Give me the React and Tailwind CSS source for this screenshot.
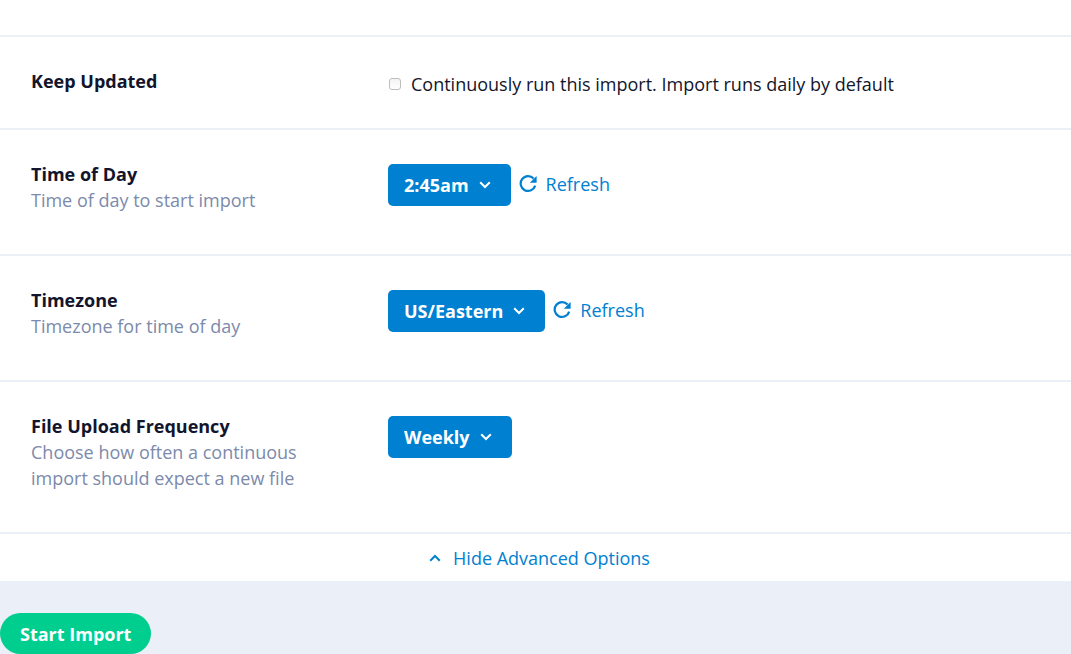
import { useState } from 'react';

const ChevronIcon = ({ className }) => (
  <svg viewBox="0 0 12 8" fill="none" stroke="currentColor" strokeWidth="2" className={className} aria-hidden="true">
    <path d="M1.2 1.3 6 6l4.8-4.7" />
  </svg>
);

const RefreshIcon = () => (
  <svg viewBox="0 0 18 18" className="h-[18px] w-[18px]" aria-hidden="true">
    <path d="M16.2 10.6A7.4 7.4 0 1 1 14.6 3.6" fill="none" stroke="currentColor" strokeWidth="2.2" />
    <path d="M17.6 1v6.8h-6.8z" fill="currentColor" />
  </svg>
);

const SettingRow = ({ title, description, htmlFor, children }) => (
  <div className="flex border-t-2 border-[#ebeff6]">
    <div className={`w-1/3 px-[31px] pt-[31px] ${description ? 'pb-[41px]' : 'pb-[34px]'}`}>
      <label htmlFor={htmlFor} className="block font-bold text-[#12152b]">{title}</label>
      {description && <p className="text-[#7c8aab]">{description}</p>}
    </div>
    <div className="flex w-2/3 items-start gap-2 px-[31px] pt-[34px]">{children}</div>
  </div>
);

const Dropdown = ({ id, options }) => (
  <div className="relative text-white">
    <select
      id={id}
      className="field-sizing-content block h-[42px] cursor-pointer appearance-none rounded-[5px] bg-[#0080d1] pr-[42px] pl-4 font-bold"
    >
      {options.map((option) => (
        <option key={option}>{option}</option>
      ))}
    </select>
    <ChevronIcon className="pointer-events-none absolute top-[17px] right-5 h-2 w-3" />
  </div>
);

const RefreshLink = () => (
  <a href="#refresh" className="flex h-10 items-center gap-[9px] text-[#0080d1]">
    <RefreshIcon />
    Refresh
  </a>
);

const App = () => {
  const [keepUpdated, setKeepUpdated] = useState(false);

  return (
    <div className="min-h-screen bg-[#ebeff7] font-['Open_Sans','Noto_Sans',sans-serif] text-[18px] leading-[26px]">
      <div className="bg-white pt-[35px]">
        <SettingRow title="Keep Updated" htmlFor="keep-updated">
          <label className="flex items-center gap-[10px] pl-px text-[#12152b]">
            <input
              id="keep-updated"
              type="checkbox"
              checked={keepUpdated}
              onChange={(e) => setKeepUpdated(e.target.checked)}
              className="h-3 w-3 appearance-none rounded-[3px] border border-[#bdbdbd] bg-linear-to-b from-[#f3f3f3] to-white checked:bg-[#0080d1]"
            />
            Continuously run this import. Import runs daily by default
          </label>
        </SettingRow>

        <SettingRow title="Time of Day" description="Time of day to start import" htmlFor="time-of-day">
          <Dropdown id="time-of-day" options={['2:45am', '3:00am', '3:15am']} />
          <RefreshLink />
        </SettingRow>

        <SettingRow title="Timezone" description="Timezone for time of day" htmlFor="timezone">
          <Dropdown id="timezone" options={['US/Eastern', 'US/Central', 'US/Pacific']} />
          <RefreshLink />
        </SettingRow>

        <SettingRow
          title="File Upload Frequency"
          description="Choose how often a continuous import should expect a new file"
          htmlFor="frequency"
        >
          <Dropdown id="frequency" options={['Weekly', 'Daily', 'Monthly']} />
        </SettingRow>

        <div className="flex h-[49px] items-center justify-center border-t-2 border-[#ebeff6] pl-2">
          <button type="button" className="flex cursor-pointer items-center gap-3 text-[#0080d1]">
            <ChevronIcon className="h-2 w-3 rotate-180" />
            Hide Advanced Options
          </button>
        </div>
      </div>

      <div className="pt-8">
        <button type="button" className="h-[41px] cursor-pointer rounded-full bg-[#00ce8f] px-5 font-bold text-white">
          Start Import
        </button>
      </div>
    </div>
  );
};

export default App;
